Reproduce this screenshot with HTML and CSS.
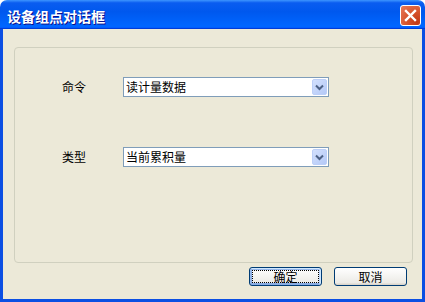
FILE: index.html
```html
<!DOCTYPE html>
<html lang="zh-CN">
<head>
<meta charset="utf-8">
<title>设备组点对话框</title>
<link rel="stylesheet" href="styles.css">
</head>
<body>
<div class="window">
  <div class="titlebar">
    <span class="title">设备组点对话框</span>
    <button class="close" aria-label="关闭">
      <svg width="19" height="19" viewBox="0 0 19 19"><path d="M5 5 L14 14 M14 5 L5 14" stroke="#fff" stroke-width="2.4" stroke-linecap="square"/></svg>
    </button>
  </div>
  <div class="body">
    <div class="group">
      <div class="row">
        <span class="label">命令</span>
        <div class="combo">
          <span class="value">读计量数据</span>
          <span class="drop"><svg width="15" height="16" viewBox="0 0 15 16"><path d="M4 6.5 L7.5 10 L11 6.5" fill="none" stroke="#4D6185" stroke-width="2"/></svg></span>
        </div>
      </div>
      <div class="row">
        <span class="label">类型</span>
        <div class="combo">
          <span class="value">当前累积量</span>
          <span class="drop"><svg width="15" height="16" viewBox="0 0 15 16"><path d="M4 6.5 L7.5 10 L11 6.5" fill="none" stroke="#4D6185" stroke-width="2"/></svg></span>
        </div>
      </div>
    </div>
    <div class="buttons">
      <button class="btn default">确定</button>
      <button class="btn">取消</button>
    </div>
  </div>
</div>
</body>
</html>
```
FILE: styles.css
```css
html, body {
  margin: 0;
  padding: 0;
  background: #ffffff;
}
body {
  font-family: "Noto Sans CJK SC", "DejaVu Sans", sans-serif;
  font-size: 12px;
  color: #000;
}
.window {
  width: 425px;
  height: 302px;
  display: flex;
  flex-direction: column;
}
.titlebar {
  height: 29px;
  flex: none;
  box-sizing: border-box;
  display: flex;
  align-items: center;
  justify-content: space-between;
  padding: 2px 4px 0 7px;
  border-radius: 7px 7px 0 0;
  background: linear-gradient(180deg, #3d95ff, #0a5cf0 10%, #0058ee 40%, #0066ff 88%, #0066ff 93%, #005bff 95%, #003dd7 96%, #003dd7);
}
.title {
  color: #fff;
  font-weight: bold;
  font-size: 14px;
  line-height: 16px;
  text-shadow: 1px 1px #0f1089;
}
.close {
  width: 21px;
  height: 21px;
  padding: 0;
  margin: 0;
  box-sizing: border-box;
  border: 1px solid #fff;
  border-radius: 3px;
  background: radial-gradient(circle at 85% 85%, #c23a17 0%, #d6532c 45%, #e87a5a 100%);
  display: flex;
  align-items: center;
  justify-content: center;
}
.close svg { display: block; }
.body {
  flex: 1;
  background: #ece9d8;
  border: 3px solid #0b4fe3;
  border-top: 0;
  padding: 18px 9px 0 11px;
  display: flex;
  flex-direction: column;
}
.group {
  height: 216px;
  box-sizing: border-box;
  border: 1px solid #d0d0bf;
  border-radius: 4px;
  padding: 29px 0 0 47px;
  display: flex;
  flex-direction: column;
  gap: 50px;
}
.row {
  display: flex;
  align-items: center;
  height: 20px;
}
.label {
  width: 61px;
  line-height: 20px;
}
.combo {
  width: 206px;
  height: 20px;
  box-sizing: border-box;
  border: 1px solid #7f9db9;
  background: #fff;
  display: flex;
  align-items: center;
  justify-content: space-between;
}
.value {
  padding-left: 2px;
  line-height: 18px;
}
.drop {
  width: 15px;
  height: 16px;
  margin-right: 1px;
  box-sizing: border-box;
  border: 1px solid #bccff8;
  border-radius: 2px;
  background: linear-gradient(135deg, #d3e0fd, #b4c9f7);
  display: flex;
  align-items: center;
  justify-content: center;
}
.drop svg { display: block; margin: -1px; }
.buttons {
  display: flex;
  justify-content: flex-end;
  gap: 12px;
  margin-top: 4px;
  padding-right: 6px;
}
.btn {
  width: 73px;
  height: 19px;
  box-sizing: border-box;
  margin: 0;
  padding: 0;
  font-family: "Noto Sans CJK SC", "DejaVu Sans", sans-serif;
  font-size: 12px;
  line-height: 15px;
  color: #000;
  border: 1px solid #003c74;
  border-radius: 3px;
  background: linear-gradient(180deg, #ffffff, #ecebe6 86%, #d6d0c5);
}
.btn.default {
  box-shadow: inset -1px 1px #cee7ff, inset 1px 2px #98b8ea, inset -2px 2px #bcd4f6, inset 1px -1px #89ade4, inset 2px -2px #89ade4;
  outline: 1px dotted #000;
  outline-offset: -4px;
}
```
